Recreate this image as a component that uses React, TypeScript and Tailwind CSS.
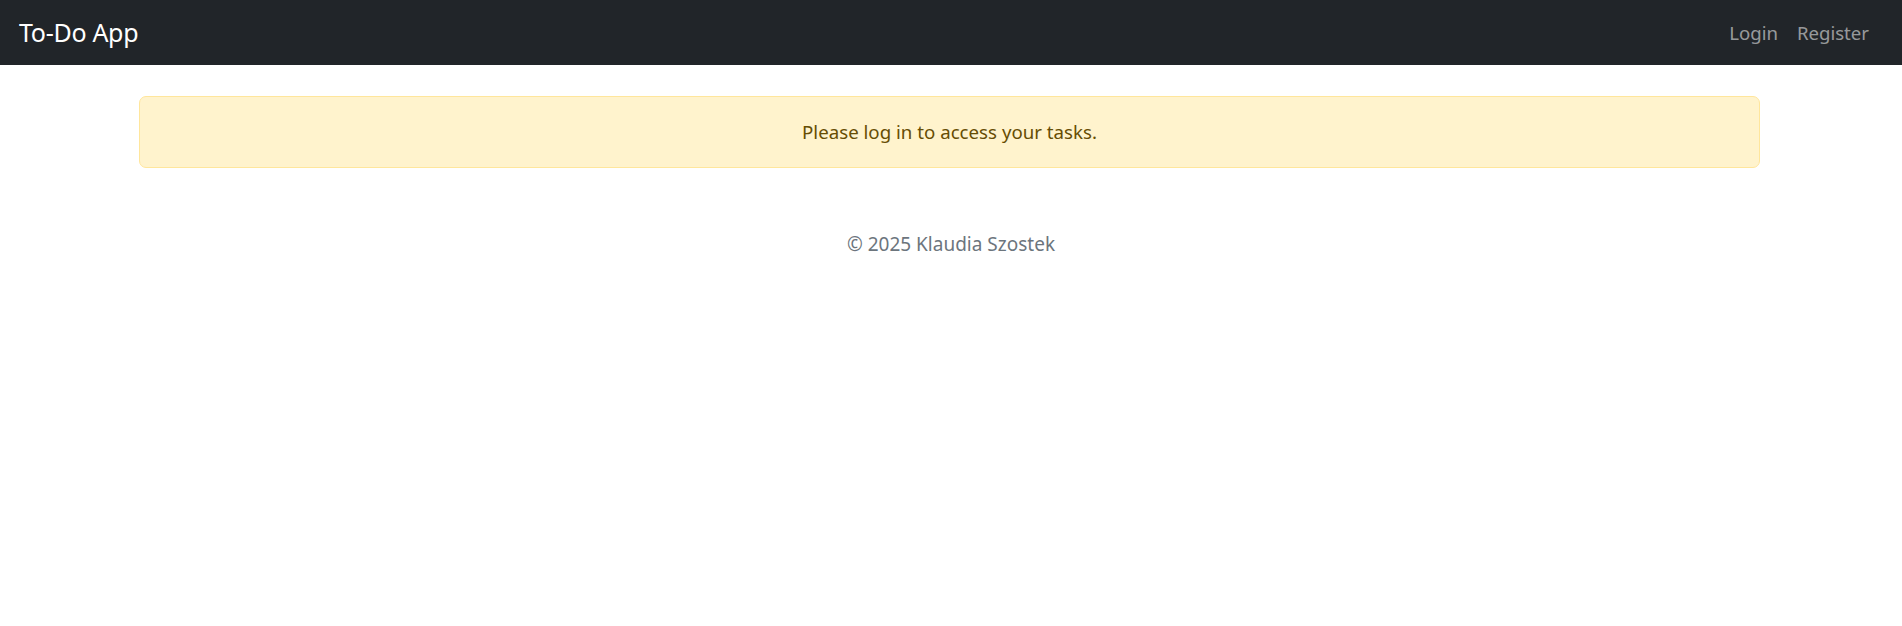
import React from "react";

export default function App() {
  return (
    <div
      className="min-h-[626px] w-full bg-white"
      style={{ fontFamily: '"Noto Sans", "Open Sans", sans-serif' }}
    >
      <nav className="flex h-[65px] items-center justify-between bg-[#212529] pl-[19px] pr-[23px]">
        <a className="text-[25px] leading-none text-white tracking-[-0.3px]">To-Do App</a>
        <div className="flex items-center">
          <a className="px-[10px] text-[18.6px] text-[rgba(255,255,255,0.55)]">Login</a>
          <a className="pl-[9px] pr-[10px] text-[18.6px] text-[rgba(255,255,255,0.55)]">Register</a>
        </div>
      </nav>
      <main className="ml-[139px] mt-[31px] w-[1621px]">
        <div className="flex h-[72px] items-center justify-center rounded-[7px] border border-[#ffe69c] bg-[#fff3cd] text-[18.7px] text-[#664d03]">
          Please log in to access your tasks.
        </div>
      </main>
      <footer className="mt-[61px] text-center text-[19px] leading-[30px] text-[#6c757d]">
        © 2025 Klaudia Szostek
      </footer>
    </div>
  );
}
